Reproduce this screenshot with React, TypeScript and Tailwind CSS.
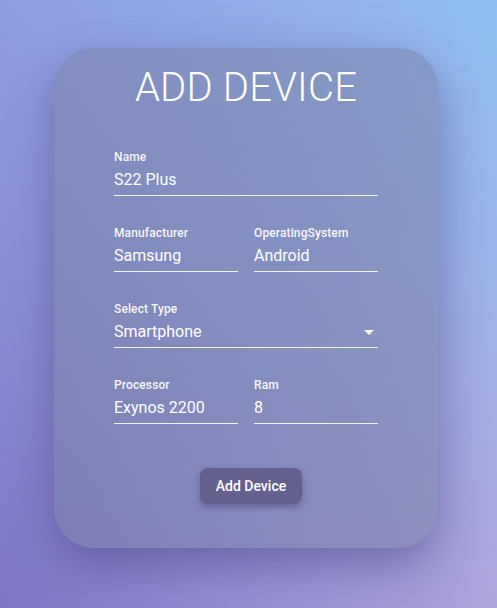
import React from "react";

function Field({ label, value, select }: { label: string; value: string; select?: boolean }) {
  return (
    <div className="flex flex-col min-w-0">
      <div className="text-[12px] leading-4 font-medium text-white/95 tracking-[0.01em]">{label}</div>
      <div className="relative mt-[3px] pb-[3px] border-b border-white/90">
        <div className="text-[16px] leading-6 text-white">{value}</div>
        {select && (
          <svg
            className="absolute right-[-3px] top-0"
            width="24"
            height="24"
            viewBox="0 0 24 24"
            fill="white"
          >
            <path d="M7 10l5 5 5-5z" />
          </svg>
        )}
      </div>
    </div>
  );
}

export default function App() {
  return (
    <div
      className="relative w-full min-h-[608px] h-[608px] overflow-hidden bg-[linear-gradient(to_right,#8f9ee0,#92b3ec_70%,#90c0f2)]"
      style={{ fontFamily: "Roboto, 'Noto Sans', Arial, sans-serif" }}
    >
      <div className="absolute inset-0 bg-[linear-gradient(to_right,#7e76c6,#9a93d4_60%,#aea4d9)] [mask-image:linear-gradient(to_bottom,transparent_0%,rgba(0,0,0,0.35)_40%,black_100%)]" />
      <div className="relative flex justify-start pt-[48px] pl-[54px]">
        <div className="w-[384px] h-[500px] rounded-[40px] bg-[rgba(118,126,160,0.5)] shadow-[0_18px_45px_rgba(60,50,115,0.45)] flex flex-col items-center pt-[16px]">
          <h1 className="text-[40px] leading-[48px] font-light text-white tracking-[0.005em]">ADD DEVICE</h1>
          <div className="w-[264px] mt-[37px] flex flex-col gap-[29px]">
            <Field label="Name" value="S22 Plus" />
            <div className="grid grid-cols-2 gap-4">
              <Field label="Manufacturer" value="Samsung" />
              <Field label="OperatingSystem" value="Android" />
            </div>
            <Field label="Select Type" value="Smartphone" select />
            <div className="grid grid-cols-2 gap-4">
              <Field label="Processor" value="Exynos 2200" />
              <Field label="Ram" value="8" />
            </div>
          </div>
          <button className="mt-[44px] ml-[10px] h-[36px] px-4 rounded-[8px] bg-[#64618f] text-white text-[14px] font-medium shadow-[0_3px_6px_rgba(40,30,80,0.35)]">
            Add Device
          </button>
        </div>
      </div>
    </div>
  );
}
